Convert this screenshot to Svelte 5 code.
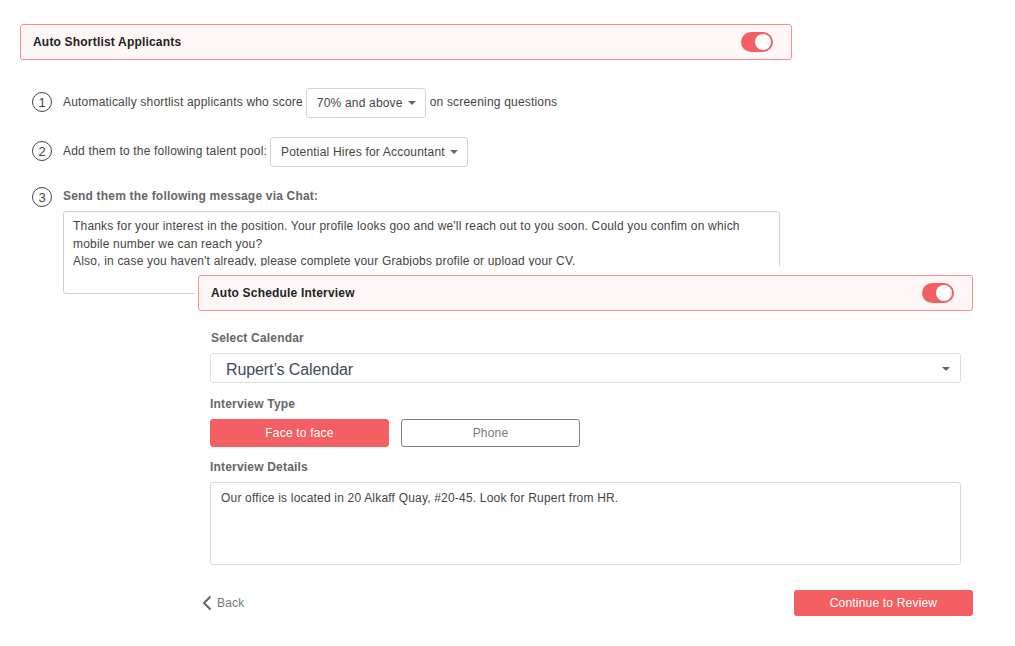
<script>
	let shortlistOn = $state(true);
	let scheduleOn = $state(true);
	let interviewType = $state("face");
</script>

<div class="page">
	<section class="shortlist">
		<div class="banner">
			<span>Auto Shortlist Applicants</span>
			<button class="toggle" class:on={shortlistOn} aria-label="Auto Shortlist Applicants" onclick={() => (shortlistOn = !shortlistOn)}></button>
		</div>

		<div class="step step-one">
			<span class="num">1</span>
			<span class="step-text">Automatically shortlist applicants who score</span>
			<div class="dropdown">70% and above <i class="caret"></i></div>
			<span class="step-text">on screening questions</span>
		</div>

		<div class="step step-two">
			<span class="num">2</span>
			<span class="step-text">Add them to the following talent pool:</span>
			<div class="dropdown">Potential Hires for Accountant <i class="caret"></i></div>
		</div>

		<div class="step step-three">
			<span class="num">3</span>
			<span class="step-label">Send them the following message via Chat:</span>
		</div>
		<div class="message">
			Thanks for your interest in the position. Your profile looks goo and we'll reach out to you soon. Could you confim on which mobile number we can reach you?<br />
			Also, in case you haven't already, please complete your Grabjobs profile or upload your CV.
		</div>
	</section>

	<section class="schedule">
		<div class="banner">
			<span>Auto Schedule Interview</span>
			<button class="toggle" class:on={scheduleOn} aria-label="Auto Schedule Interview" onclick={() => (scheduleOn = !scheduleOn)}></button>
		</div>

		<div class="fields">
			<div class="field-label calendar-label">Select Calendar</div>
			<div class="calendar">Rupert’s Calendar <i class="caret"></i></div>

			<div class="field-label type-label">Interview Type</div>
			<div class="types">
				<button class="type" class:active={interviewType === "face"} onclick={() => (interviewType = "face")}>Face to face</button>
				<button class="type" class:active={interviewType === "phone"} onclick={() => (interviewType = "phone")}>Phone</button>
			</div>

			<div class="field-label details-label">Interview Details</div>
			<div class="details">Our office is located in 20 Alkaff Quay, #20-45. Look for Rupert from HR.</div>
		</div>

		<div class="actions">
			<div class="back">
				<svg width="11" height="16" viewBox="0 0 11 16" fill="none"><path d="M9.5 1.5 3 8l6.5 6.5" stroke="#666" stroke-width="2" /></svg>
				Back
			</div>
			<button class="continue">Continue to Review</button>
		</div>
	</section>
</div>

<style>
	:global(body) {
		margin: 0;
		background: #fff;
		font-family: "Liberation Sans", Arial, sans-serif;
	}

	.page {
		position: relative;
		width: 1015px;
		height: 646px;
		overflow: hidden;
		font-size: 12px;
		letter-spacing: 0.19px;
		color: #333;
	}

	button {
		font: inherit;
		letter-spacing: inherit;
		cursor: pointer;
	}

	.shortlist {
		width: 772px;
		padding: 24px 0 0 20px;
	}

	.banner {
		display: flex;
		align-items: center;
		justify-content: space-between;
		box-sizing: border-box;
		height: 36px;
		padding: 0 18px 0 12px;
		background: #fff7f7;
		border: 1px solid #f68e8e;
		border-radius: 3px;
		font-weight: 700;
		color: #222;
	}

	.banner span {
		padding-bottom: 1px;
	}

	.toggle {
		position: relative;
		width: 32px;
		height: 20px;
		padding: 0;
		border: 0;
		border-radius: 10px;
		background: #ccc;
	}

	.toggle.on {
		background: #f45f63;
	}

	.toggle::after {
		content: "";
		position: absolute;
		top: 2px;
		left: 2px;
		width: 16px;
		height: 16px;
		border-radius: 50%;
		background: #fff;
	}

	.toggle.on::after {
		left: 14px;
	}

	.step {
		display: flex;
		align-items: center;
		margin-left: 12px;
	}

	.step-one {
		margin-top: 28px;
		height: 30px;
	}

	.step-two {
		margin-top: 19px;
		height: 30px;
	}

	.step-three {
		margin-top: 20px;
		height: 20px;
	}

	.num {
		display: flex;
		align-items: center;
		justify-content: center;
		box-sizing: border-box;
		flex: none;
		width: 20px;
		height: 20px;
		border: 1.3px solid #444;
		border-radius: 50%;
		color: #444;
		font-size: 13px;
		letter-spacing: 0;
		margin-right: 11px;
	}

	.step-one .num,
	.step-two .num {
		margin-bottom: 2px;
	}

	.step-text {
		padding-bottom: 2px;
		color: #444;
	}

	.step-label {
		padding-bottom: 2px;
		color: #666;
		font-weight: 700;
	}

	.dropdown {
		display: flex;
		align-items: center;
		box-sizing: border-box;
		height: 30px;
		margin: 0 4px 0 3px;
		padding: 0 9px 0 10px;
		border: 1px solid #d4d4d4;
		border-radius: 3px;
		color: #444;
		background: #fff;
		white-space: nowrap;
	}

	.caret {
		display: inline-block;
		width: 0;
		height: 0;
		margin-left: 5px;
		border-left: 4px solid transparent;
		border-right: 4px solid transparent;
		border-top: 4px solid #666;
	}

	.message {
		box-sizing: border-box;
		width: 717px;
		height: 83px;
		margin: 4px 0 0 43px;
		padding: 6px 9px;
		border: 1px solid #d2d2d2;
		border-radius: 3px;
		line-height: 17.5px;
		color: #444;
	}

	/* second step of the wizard sits over the message box */
	.schedule {
		position: absolute;
		left: 195px;
		top: 266px;
		width: 778px;
		height: 380px;
		box-sizing: border-box;
		padding: 9px 0 0 3px;
		background: #fff;
	}

	.fields {
		padding: 0 12px;
	}

	.field-label {
		color: #666;
		font-weight: 700;
	}

	.calendar-label {
		margin: 20px 0 0 1px;
		height: 14px;
		line-height: 14px;
	}

	.calendar {
		position: relative;
		box-sizing: border-box;
		height: 30px;
		margin-top: 8px;
		padding: 0 15px;
		border: 1px solid #dedede;
		border-radius: 3px;
		font-size: 16px;
		letter-spacing: -0.1px;
		line-height: 31px;
		color: #3c4a5e;
	}

	.calendar .caret {
		position: absolute;
		right: 10px;
		top: 13px;
	}

	.type-label {
		margin-top: 14px;
		height: 14px;
		line-height: 14px;
	}

	.types {
		display: flex;
		gap: 12px;
		margin-top: 8px;
	}

	.type {
		width: 179px;
		height: 28px;
		padding: 0;
		border: 1px solid #808080;
		border-radius: 3px;
		background: #fff;
		color: #777;
	}

	.type.active {
		border-color: #f45f63;
		background: #f45f63;
		color: #fff;
	}

	.details-label {
		margin-top: 13px;
		height: 14px;
		line-height: 14px;
	}

	.details {
		box-sizing: border-box;
		height: 83px;
		margin-top: 8px;
		padding: 7px 10px;
		border: 1px solid #d8d8d8;
		border-radius: 3px;
		line-height: 17.5px;
		color: #444;
	}

	.actions {
		display: flex;
		align-items: center;
		justify-content: space-between;
		margin-top: 25px;
	}

	.back {
		display: flex;
		align-items: center;
		gap: 5px;
		margin-left: 3px;
		color: #777;
	}

	.continue {
		width: 179px;
		height: 26px;
		padding: 0;
		border: 0;
		border-radius: 3px;
		background: #f45f63;
		color: #fff;
	}
</style>
